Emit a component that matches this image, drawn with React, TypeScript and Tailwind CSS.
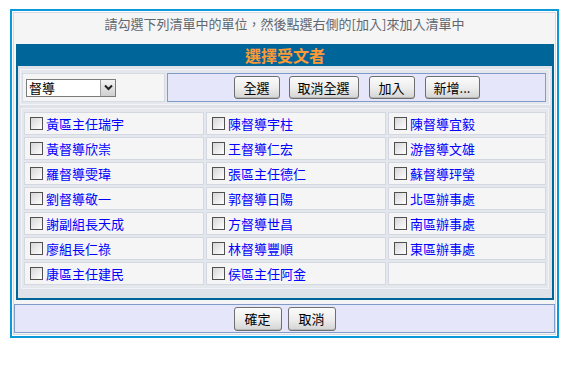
import React from "react"

const rows: string[][] = [
  ["黃區主任瑞宇", "陳督導宇柱", "陳督導宜毅"],
  ["黃督導欣崇", "王督導仁宏", "游督導文雄"],
  ["羅督導雯瑋", "張區主任德仁", "蘇督導玶瑩"],
  ["劉督導敬一", "郭督導日陽", "北區辦事處"],
  ["謝副組長天成", "方督導世昌", "南區辦事處"],
  ["廖組長仁祿", "林督導豐順", "東區辦事處"],
  ["康區主任建民", "侯區主任阿金", ""],
]

function Btn({ label, w, h = "h-[23px]" }: { label: string; w: string; h?: string }) {
  return (
    <button
      className={`${w} ${h} shrink-0 rounded-[3px] border border-[#6e6e6e] bg-linear-to-b from-[#fbfbfb] via-[#eeeeee] to-[#d4d4d4] text-[13px] leading-none text-black shadow-[inset_0_-1px_0_#b8b8b8]`}
    >
      {label}
    </button>
  )
}

function Check() {
  return <span className="block h-[13px] w-[13px] shrink-0 border border-[#505050] bg-linear-to-br from-[#d6d6d6] to-white" />
}

export default function App() {
  return (
    <div className="h-[369px] w-[583px] bg-white pl-[10px] pt-[9px] font-['Noto_Sans_CJK_TC','Liberation_Sans',sans-serif]">
      <div className="h-[329px] w-[549px] border-2 border-[#0a9ad9] bg-white p-px">
        <div className="flex h-full w-full flex-col border border-[#d6dae2] bg-[#f5f5f5]">
          <div className="h-[22px] text-center text-[13px] leading-[22px] text-[#5f6770]">
            請勾選下列清單中的單位，然後點選右側的[加入]來加入清單中
          </div>

          {/* 選擇受文者 panel */}
          <div className="ml-[2px] mt-[9px] w-[538px] bg-[#006699]">
            <div className="h-[22px] text-center text-[16px] font-bold leading-[22px] text-[#ff9933]">
              選擇受文者
            </div>
            <div className="px-[2px] pb-[2px]">
              <div className="h-[232px] bg-[#dfe3e9] pt-[3px]">
                <div className="ml-[2px] w-[530px] border border-[#f4f5f8] bg-[#e4e7ec] pb-[2px] pl-px pt-[3px]">
                  <div className="flex gap-[2px]">
                    <div className="flex h-[29px] w-[143px] items-center border border-[#d6dae2] bg-[#f5f5f5] pl-[3px]">
                      <div className="flex h-[18px] w-[90px] border border-[#7c7c7c] bg-white">
                        <span className="flex-1 pl-[2px] text-[13px] leading-[16px] text-black">督導</span>
                        <span className="flex w-[15px] items-center justify-center border-l border-[#a0a0a0] bg-linear-to-b from-[#f4f4f4] to-[#cfcfcf]">
                          <svg width="9" height="7" viewBox="0 0 9 7">
                            <path d="M1 1.5 L4.5 5 L8 1.5" fill="none" stroke="#222" strokeWidth="2" />
                          </svg>
                        </span>
                      </div>
                    </div>
                    <div className="flex h-[29px] w-[379px] items-center justify-center border border-[#7f9cca] bg-[#e6e6fa]">
                      <Btn label="全選" w="w-[46px]" />
                      <span className="w-[9px]" />
                      <Btn label="取消全選" w="w-[70px]" />
                      <span className="w-[10px]" />
                      <Btn label="加入" w="w-[46px]" />
                      <span className="w-[10px]" />
                      <Btn label="新增..." w="w-[55px]" />
                    </div>
                  </div>
                </div>

                <div className="ml-[3px] mt-[3px] w-[528px] border border-[#f1f2f5] bg-[#e4e7ec] p-[3px] px-[2px]">
                  <div className="grid grid-cols-[180px_180px_158px] gap-[2px]">
                    {rows.flat().map((name, i) => (
                      <div
                        key={i}
                        className="flex h-[23px] items-center gap-[3px] border border-[#d4d8e2] bg-[#f5f5f5] pl-[5px]"
                      >
                        {name && (
                          <>
                            <Check />
                            <span className="text-[13px] leading-none text-[#0000ff]">{name}</span>
                          </>
                        )}
                      </div>
                    ))}
                  </div>
                </div>
              </div>
            </div>
          </div>

          <div className="mt-[4px] flex h-[29px] w-full items-center justify-center gap-[6px] border border-[#7f9cca] bg-[#e6e6fa]">
            <Btn label="確定" w="w-[48px]" h="h-[24px]" />
            <Btn label="取消" w="w-[48px]" h="h-[24px]" />
          </div>
        </div>
      </div>
    </div>
  )
}
